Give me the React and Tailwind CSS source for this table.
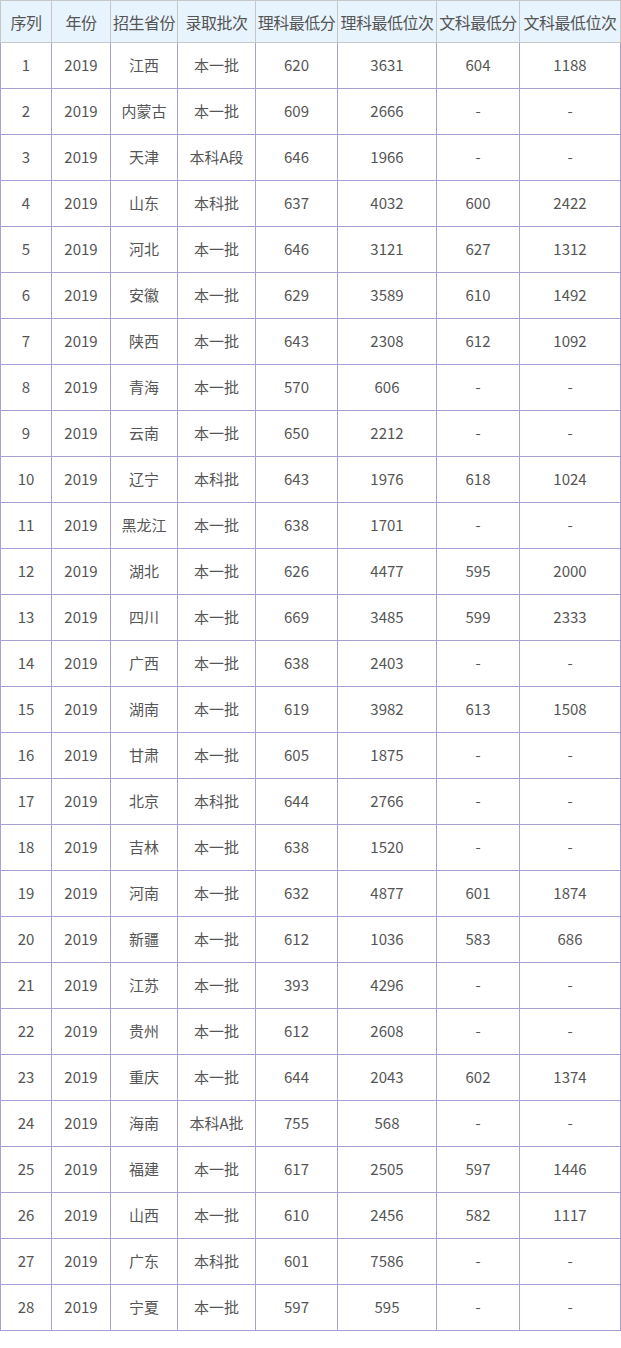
import React from 'react';

const rows = [
  ['1', '江西', '本一批', '620', '3631', '604', '1188'],
  ['2', '内蒙古', '本一批', '609', '2666', '-', '-'],
  ['3', '天津', '本科A段', '646', '1966', '-', '-'],
  ['4', '山东', '本科批', '637', '4032', '600', '2422'],
  ['5', '河北', '本一批', '646', '3121', '627', '1312'],
  ['6', '安徽', '本一批', '629', '3589', '610', '1492'],
  ['7', '陕西', '本一批', '643', '2308', '612', '1092'],
  ['8', '青海', '本一批', '570', '606', '-', '-'],
  ['9', '云南', '本一批', '650', '2212', '-', '-'],
  ['10', '辽宁', '本科批', '643', '1976', '618', '1024'],
  ['11', '黑龙江', '本一批', '638', '1701', '-', '-'],
  ['12', '湖北', '本一批', '626', '4477', '595', '2000'],
  ['13', '四川', '本一批', '669', '3485', '599', '2333'],
  ['14', '广西', '本一批', '638', '2403', '-', '-'],
  ['15', '湖南', '本一批', '619', '3982', '613', '1508'],
  ['16', '甘肃', '本一批', '605', '1875', '-', '-'],
  ['17', '北京', '本科批', '644', '2766', '-', '-'],
  ['18', '吉林', '本一批', '638', '1520', '-', '-'],
  ['19', '河南', '本一批', '632', '4877', '601', '1874'],
  ['20', '新疆', '本一批', '612', '1036', '583', '686'],
  ['21', '江苏', '本一批', '393', '4296', '-', '-'],
  ['22', '贵州', '本一批', '612', '2608', '-', '-'],
  ['23', '重庆', '本一批', '644', '2043', '602', '1374'],
  ['24', '海南', '本科A批', '755', '568', '-', '-'],
  ['25', '福建', '本一批', '617', '2505', '597', '1446'],
  ['26', '山西', '本一批', '610', '2456', '582', '1117'],
  ['27', '广东', '本科批', '601', '7586', '-', '-'],
  ['28', '宁夏', '本一批', '597', '595', '-', '-'],
];

const headers = ['序列', '年份', '招生省份', '录取批次', '理科最低分', '理科最低位次', '文科最低分', '文科最低位次'];
const widths = ['w-[51px]', 'w-[59px]', 'w-[67px]', 'w-[78px]', 'w-[82px]', 'w-[99px]', 'w-[83px]', 'w-[101px]'];

export default function App() {
  return (
    <div className="bg-white w-[621px] h-[1348px] font-['Noto_Sans_CJK_SC','Noto_Sans',sans-serif] text-[#555]">
      <table className="border-collapse table-fixed w-[620px]">
        <colgroup>
          {widths.map((w, i) => (
            <col key={i} className={w} />
          ))}
        </colgroup>
        <thead>
          <tr className="h-[42px] bg-[#e8f4fd]">
            {headers.map((h) => (
              <th
                key={h}
                className="border border-[#c6c6c6] font-normal text-[16px] text-center whitespace-nowrap p-0 tracking-[-0.5px]"
              >
                {h}
              </th>
            ))}
          </tr>
        </thead>
        <tbody>
          {rows.map((r) => (
            <tr key={r[0]} className="h-[46px]">
              <td className="border border-[#a99fd2] text-center text-[15px] p-0">{r[0]}</td>
              <td className="border border-[#a99fd2] text-center text-[15px] p-0">2019</td>
              {r.slice(1).map((c, i) => (
                <td key={i} className="border border-[#a99fd2] text-center text-[15px] p-0 whitespace-nowrap">
                  {c}
                </td>
              ))}
            </tr>
          ))}
        </tbody>
      </table>
    </div>
  );
}
